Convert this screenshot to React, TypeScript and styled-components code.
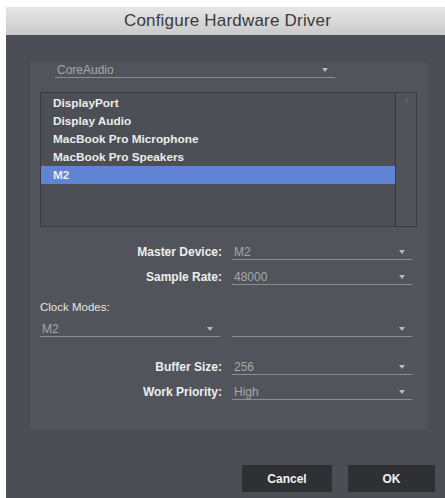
import React from 'react';
import styled, { createGlobalStyle } from 'styled-components';

const GlobalStyle = createGlobalStyle`
  html, body {
    margin: 0;
    padding: 0;
    background: #ffffff;
  }
  body {
    font-family: "Liberation Sans", Arial, sans-serif;
  }
`;

const Window = styled.div`
  margin: 7px 0 0 6px;
  width: 439px;
  height: 491px;
  display: flex;
  flex-direction: column;
  overflow: hidden;
`;

const TitleBar = styled.div`
  height: 28px;
  background: linear-gradient(#e6e6e6, #cacaca);
  display: flex;
  align-items: center;
  justify-content: center;
  padding-left: 4px;
  color: #3a3a3a;
  font-size: 17px;
  letter-spacing: 0.2px;
`;

const Body = styled.div`
  flex: 1;
  background: #4b4e54;
  padding: 25px 17px 0 22px;
  display: flex;
  flex-direction: column;
`;

const Panel = styled.div`
  height: 370px;
  box-sizing: border-box;
  background: #51545a;
  box-shadow: inset 1px 1px 2px rgba(0, 0, 0, 0.15);
  padding: 2px 11px 0 12px;
  display: flex;
  flex-direction: column;
`;

const Select = styled.div<{ $width: number; $indent?: number }>`
  width: ${(p) => p.$width}px;
  margin-left: ${(p) => p.$indent ?? 0}px;
  height: 16px;
  box-sizing: border-box;
  border-bottom: 1px solid #8a8e94;
  display: flex;
  align-items: center;
  justify-content: space-between;
  padding: 0 7px 0 2px;
  color: #a4a8ae;
  font-size: 12px;
`;

const Arrow = styled.span`
  width: 0;
  height: 0;
  border-left: 3.5px solid transparent;
  border-right: 3.5px solid transparent;
  border-top: 4px solid #b5b9be;
`;

const DeviceList = styled.div`
  margin-top: 14px;
  height: 135px;
  box-sizing: border-box;
  border: 1px solid #393b40;
  background: #4c4f55;
  display: flex;
`;

const Items = styled.div`
  flex: 1;
  padding-top: 1px;
  display: flex;
  flex-direction: column;
`;

const Item = styled.div<{ $selected?: boolean }>`
  height: 18px;
  display: flex;
  align-items: center;
  padding-left: 12px;
  font-size: 11.8px;
  font-weight: bold;
  color: #ececec;
  background: ${(p) => (p.$selected ? '#6183d3' : 'transparent')};
`;

const ScrollTrack = styled.div`
  width: 21px;
  border-left: 1px solid #393b40;
  background: #505359;
  display: flex;
  justify-content: center;
  padding-top: 5px;
  box-sizing: border-box;
`;

const ScrollMark = styled.div`
  width: 1px;
  height: 5px;
  background: #6a6d73;
`;

const Form = styled.div<{ $top: number }>`
  margin-top: ${(p) => p.$top}px;
  display: grid;
  grid-template-columns: 182px 180px;
  column-gap: 10px;
  row-gap: 9px;
`;

const Label = styled.div`
  height: 16px;
  display: flex;
  align-items: center;
  justify-content: flex-end;
  padding-bottom: 1px;
  box-sizing: border-box;
  color: #eeeeee;
  font-size: 12px;
  font-weight: bold;
`;

const SectionLabel = styled.div`
  margin-top: 15px;
  height: 14px;
  display: flex;
  align-items: center;
  color: #e6e6e6;
  font-size: 11.5px;
`;

const Buttons = styled.div`
  margin-top: 35px;
  display: flex;
  justify-content: flex-end;
  gap: 16px;
  margin-right: -7px;
`;

const Button = styled.button<{ $width: number }>`
  width: ${(p) => p.$width}px;
  height: 27px;
  border: none;
  background: #2e3034;
  color: #f2f2f2;
  font-family: "Liberation Sans", Arial, sans-serif;
  font-size: 12px;
  font-weight: bold;
  padding: 0;
`;

const devices = ['DisplayPort', 'Display Audio', 'MacBook Pro Microphone', 'MacBook Pro Speakers', 'M2'];

const Field: React.FC<{ label: string; value: string }> = ({ label, value }) => (
  <>
    <Label>{label}</Label>
    <Select $width={180}>
      <span>{value}</span>
      <Arrow />
    </Select>
  </>
);

const App: React.FC = () => {
  return (
    <>
      <GlobalStyle />
      <Window>
        <TitleBar>Configure Hardware Driver</TitleBar>
        <Body>
          <Panel>
            <Select $width={280} $indent={15}>
              <span>CoreAudio</span>
              <Arrow />
            </Select>
            <DeviceList>
              <Items>
                {devices.map((d) => (
                  <Item key={d} $selected={d === 'M2'}>
                    {d}
                  </Item>
                ))}
              </Items>
              <ScrollTrack>
                <ScrollMark />
              </ScrollTrack>
            </DeviceList>
            <Form $top={17}>
              <Field label="Master Device:" value="M2" />
              <Field label="Sample Rate:" value="48000" />
            </Form>
            <SectionLabel>Clock Modes:</SectionLabel>
            <Form $top={7}>
              <Select $width={180}>
                <span>M2</span>
                <Arrow />
              </Select>
              <Select $width={180}>
                <span />
                <Arrow />
              </Select>
            </Form>
            <Form $top={22}>
              <Field label="Buffer Size:" value="256" />
              <Field label="Work Priority:" value="High" />
            </Form>
          </Panel>
          <Buttons>
            <Button $width={90}>Cancel</Button>
            <Button $width={87}>OK</Button>
          </Buttons>
        </Body>
      </Window>
    </>
  );
};

export default App;
